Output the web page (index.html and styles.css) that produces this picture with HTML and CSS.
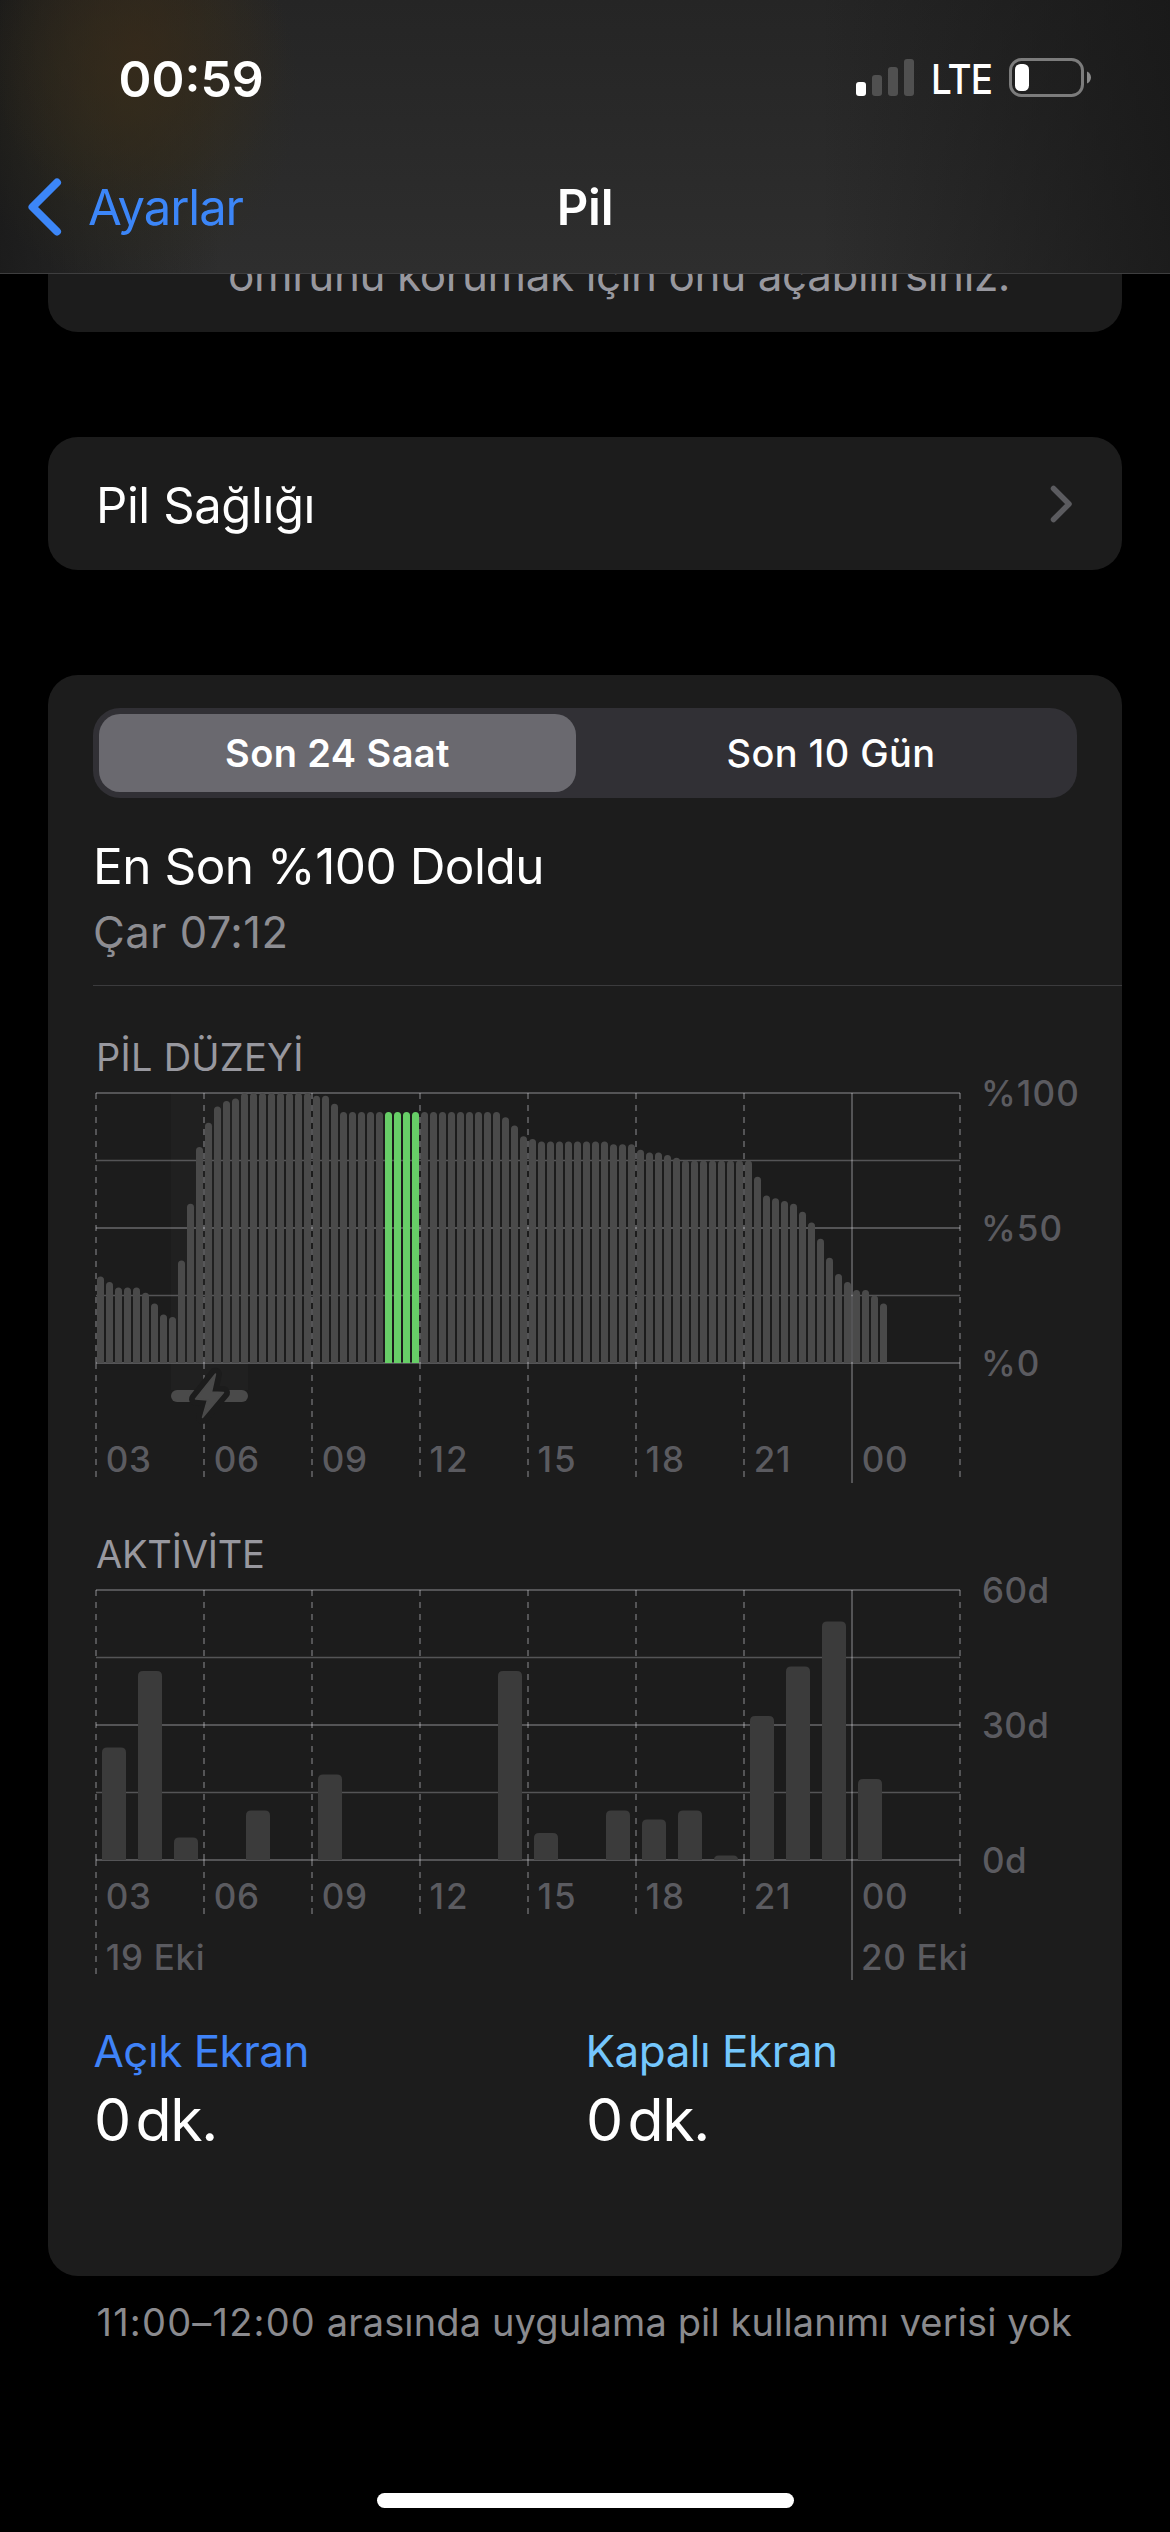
FILE: index.html
```html
<!DOCTYPE html>
<html lang="tr">
<head>
<meta charset="utf-8">
<title>Pil</title>
<link rel="stylesheet" href="styles.css">
</head>
<body>
<header class="header">
  <div class="status">
    <span class="time">00:59</span>
    <div class="indicators">
      <svg class="signal" width="58" height="37" viewBox="0 0 58 37">
        <rect x="0" y="23" width="10" height="14" rx="3" fill="#fff"/>
        <rect x="16" y="16" width="10" height="21" rx="3" fill="#505050"/>
        <rect x="32" y="8" width="10" height="29" rx="3" fill="#505050"/>
        <rect x="48" y="0" width="10" height="37" rx="3" fill="#505050"/>
      </svg>
      <span class="network">LTE</span>
      <svg class="battery" width="82" height="39" viewBox="0 0 82 39">
        <rect x="1.5" y="1.5" width="72" height="36" rx="11" fill="none" stroke="#7c7c7c" stroke-width="3"/>
        <rect x="6" y="6" width="14" height="27" rx="5.5" fill="#fff"/>
        <path d="M78 13.5c2.6 1.2 4 3.400 4 6s-1.400 4.800-4 6z" fill="#8a8a8a"/>
      </svg>
    </div>
  </div>
  <nav class="nav">
    <a class="back">
      <svg width="34" height="58" viewBox="0 0 34 58"><path d="M29 4.500L4.500 29 29 53.500" fill="none" stroke="#3c86f8" stroke-width="8" stroke-linecap="round" stroke-linejoin="round"/></svg>
      <span>Ayarlar</span>
    </a>
    <h1 class="title">Pil</h1>
  </nav>
</header>

<main class="content">
  <section class="card note">ömrünü korumak için onu açabilirsiniz.</section>

  <section class="card link-row">
    <span class="link-label">Pil Sağlığı</span>
    <svg width="23" height="38" viewBox="0 0 23 38"><path d="M3.500 3.500L19 19 3.500 34.500" fill="none" stroke="#5b5b5f" stroke-width="5.500" stroke-linecap="round" stroke-linejoin="round"/></svg>
  </section>

  <section class="card usage">
    <div class="segmented">
      <div class="segment selected">Son 24 Saat</div>
      <div class="segment">Son 10 Gün</div>
    </div>
    <div class="last-charge">
      <div class="charge-title">En Son %100 Doldu</div>
      <div class="charge-time">Çar 07:12</div>
    </div>

    <h2 class="chart-title level-title">PİL DÜZEYİ</h2>
    <svg class="chart" width="1029" height="408" viewBox="0 0 1029 408">
      <g transform="translate(3 11)">
        <rect class="charge-zone" x="75" y="0" width="77" height="297"/>
        <path class="grid" d="M0 0H864M0 135H864M0 270H864"/>
        <path class="grid thin" d="M0 67.500H864M0 202.500H864"/>
        <path class="grid dash" d="M0 0V270M108 0V270M216 0V270M324 0V270M432 0V270M540 0V270M648 0V270M864 0V270"/>
        <path class="grid dash" d="M0 270V384M108 270V384M216 270V384M324 270V384M432 270V384M540 270V384M648 270V384M864 270V384"/>
        <path class="grid" d="M756 0V390"/>
        <g id="level-bars"></g>
        <rect class="charge-fill" x="75" y="297" width="77" height="12" rx="6"/>
        <path class="bolt-halo" d="M119.500 281L99.500 306l12 1-5 17.500 21-25-12-.5z"/>
        <path class="bolt" d="M119.500 281L99.500 306l12 1-5 17.500 21-25-12-.5z"/>
        <g class="axis percent">
          <text x="885" y="13">%100</text>
          <text x="885" y="148">%50</text>
          <text x="885" y="283">%0</text>
        </g>
        <g class="axis">
          <text x="9.700" y="379">03</text><text x="117.700" y="379">06</text><text x="225.700" y="379">09</text>
          <text class="teen" x="333.500" y="379">12</text><text class="teen" x="441.500" y="379">15</text><text class="teen" x="549.500" y="379">18</text>
          <text x="657.700" y="379">21</text><text x="765.700" y="379">00</text>
        </g>
      </g>
    </svg>

    <h2 class="chart-title activity-title">AKTİVİTE</h2>
    <svg class="chart" width="1029" height="411" viewBox="0 0 1029 411">
      <g transform="translate(3 11)">
        <path class="grid" d="M0 0H864M0 135H864M0 270H864"/>
        <path class="grid thin" d="M0 67.500H864M0 202.500H864"/>
        <path class="grid dash" d="M0 0V270M108 0V270M216 0V270M324 0V270M432 0V270M540 0V270M648 0V270M864 0V270"/>
        <path class="grid dash" d="M0 270V384M108 270V324M216 270V324M324 270V324M432 270V324M540 270V324M648 270V324M864 270V324"/>
        <path class="grid" d="M756 0V390"/>
        <g id="activity-bars"></g>
        <g class="axis minutes">
          <text x="886" y="13">60d</text>
          <text x="886" y="148">30d</text>
          <text x="886" y="283">0d</text>
        </g>
        <g class="axis">
          <text x="9.700" y="319">03</text><text x="117.700" y="319">06</text><text x="225.700" y="319">09</text>
          <text class="teen" x="333.500" y="319">12</text><text class="teen" x="441.500" y="319">15</text><text class="teen" x="549.500" y="319">18</text>
          <text x="657.700" y="319">21</text><text x="765.700" y="319">00</text>
          <text x="9.700" y="380">19 Eki</text><text x="765" y="380">20 Eki</text>
        </g>
      </g>
    </svg>

    <div class="totals">
      <div>
        <div class="total-label on">Açık Ekran</div>
        <div class="total-value">0 dk.</div>
      </div>
      <div>
        <div class="total-label off">Kapalı Ekran</div>
        <div class="total-value">0 dk.</div>
      </div>
    </div>
  </section>

  <p class="footnote"><span class="range">11:00–12:00</span> arasında uygulama pil kullanımı verisi yok</p>
</main>
<div class="home-indicator"></div>
<script src="script.js"></script>
</body>
</html>
```
FILE: styles.css
```css
* { box-sizing: border-box; margin: 0; padding: 0; }

body {
  position: relative;
  width: 1170px;
  height: 2532px;
  overflow: hidden;
  background: #000;
  color: #fff;
  font-family: Inter, "Liberation Sans", sans-serif;
  font-weight: 400;
  white-space: nowrap;
}

svg { display: block; flex: none; }

/* Translucent bar that stays above the scrolled list */
.header {
  position: absolute;
  top: 0;
  left: 0;
  z-index: 1;
  width: 1170px;
  height: 274px;
  border-bottom: 1px solid #3e3e3f;
  background:
    radial-gradient(ellipse 150px 170px at 138px 50px, rgba(56, 42, 26, .7), rgba(54, 44, 28, 0)),
    radial-gradient(ellipse 170px 200px at 130px 90px, rgba(50, 46, 28, .75), rgba(46, 44, 30, 0)),
    linear-gradient(90deg, rgba(22, 22, 22, .75), rgba(24, 24, 24, 0) 220px, rgba(24, 24, 24, 0) 820px, rgba(22, 22, 22, .75)),
    linear-gradient(#252525, #2e2e2e);
}

.status {
  display: flex;
  align-items: center;
  justify-content: space-between;
  height: 157px;
  padding: 0 79px 0 118.5px;
}

.time { font-size: 50px; font-weight: 600; line-height: 60px; }

.indicators { display: flex; align-items: center; }
.signal { margin-right: 17px; }
.signal, .battery { transform: translateY(-1px); }
.network {
  width: 78px;
  font-size: 41px;
  font-weight: 500;
  line-height: 50px;
  letter-spacing: -1px;
  transform: scaleX(.9);
  transform-origin: left;
}

.nav {
  display: grid;
  grid-template-columns: 1fr auto 1fr;
  align-items: center;
  height: 100px;
}

.back {
  display: flex;
  align-items: center;
  gap: 26px;
  padding-left: 28px;
  color: #3c86f8;
  font-size: 49px;
  letter-spacing: -1.05px;
}

.title { font-size: 49px; font-weight: 600; letter-spacing: -.2px; }

.content { padding: 0 48px; }

.card { border-radius: 30px; background: #1c1c1c; }

.note {
  height: 332px;
  padding: 245px 0 0 180px;
  color: #98989f;
  font-size: 44px;
  line-height: 60px;
  letter-spacing: -.4px;
}

.link-row {
  display: flex;
  align-items: center;
  justify-content: space-between;
  height: 133px;
  margin-top: 105px;
  padding: 0 49px 0 48px;
}
.link-label { padding-top: 3px; font-size: 49px; letter-spacing: -.4px; }

.usage { height: 1601px; margin-top: 105px; padding: 33px 0 0 45px; }

.segmented {
  display: grid;
  grid-template-columns: 477px 1fr;
  gap: 15px;
  width: 984px;
  height: 90px;
  padding: 6px;
  border-radius: 27px;
  background: #313035;
}
.segment {
  display: flex;
  align-items: center;
  justify-content: center;
  font-size: 38px;
  font-weight: 500;
  letter-spacing: .4px;
}
.segment.selected { border-radius: 21px; background: #6a696f; font-weight: 600; }

.last-charge {
  height: 188px;
  padding-top: 35px;
  border-bottom: 1px solid #3b3b3d;
  line-height: 66px;
}
.charge-title { font-size: 49.5px; letter-spacing: -.5px; }
.charge-time { color: #8d8d92; font-size: 43.5px; letter-spacing: .46px; }

.chart-title {
  margin-left: 3px;
  color: #98989f;
  font-size: 38px;
  font-weight: 400;
  line-height: 50px;
}
.level-title { margin-top: 46px; letter-spacing: .25px; }
.activity-title { margin-top: 39px; letter-spacing: -.2px; }

.chart { overflow: visible; }
.grid { fill: none; stroke: rgba(235, 235, 245, .27); stroke-width: 2; }
.grid.thin { stroke-width: 1.3; }
.grid.dash { stroke-dasharray: 6; }
.charge-zone { fill: #202020; }
.charge-fill { fill: #4a4a4a; }
.bolt-halo { fill: #1c1c1c; stroke: #1c1c1c; stroke-width: 13; stroke-linejoin: round; }
.bolt { fill: #4a4a4a; stroke: #4a4a4a; stroke-width: 1.5; stroke-linejoin: round; }
.level { fill: #4a4a4a; }
.level.active { fill: #67ce67; }
.activity { fill: #3b3b3b; }

.axis { fill: #5b5b60; font-size: 35px; font-weight: 500; letter-spacing: .7px; }
.axis .teen { letter-spacing: 2px; }
.percent { letter-spacing: 1.1px; }
.minutes { letter-spacing: .4px; }

.totals { display: grid; grid-template-columns: 492px 1fr; margin-top: 32px; }
.total-label { margin-left: .5px; font-size: 44px; line-height: 58px; letter-spacing: -.5px; }
.total-label.on { color: #3f83f8; }
.total-label.off { color: #74c7fd; }
.total-value { margin-left: 1px; font-size: 59px; line-height: 80px; letter-spacing: -1.4px; word-spacing: -9.5px; }

.footnote {
  margin: 21px 0 0 48.5px;
  color: #8a8a8e;
  font-size: 38px;
  line-height: 50px;
  letter-spacing: .12px;
}
.range { letter-spacing: 1.2px; }

.home-indicator {
  position: absolute;
  bottom: 24px;
  left: 377px;
  width: 417px;
  height: 15px;
  border-radius: 8px;
  background: #fff;
}
```
FILE: script.js
```js
// Battery level in percent, one sample per quarter hour starting at 03:00
const levels = [
  32, 30, 28, 28, 28, 26, 22, 18, 17, 38, 59, 80,
  89, 95, 97, 98, 100, 100, 100, 100, 100, 100, 100, 100,
  99, 99, 96, 93, 93, 93, 93, 93, 93, 93, 93, 93,
  93, 93, 93, 93, 93, 93, 93, 93, 93, 91, 88, 84,
  83, 82, 82, 82, 82, 82, 82, 82, 82, 81, 81, 81,
  79, 78, 78, 77, 76, 75, 75, 75, 75, 75, 75, 75,
  75, 69, 62, 61, 60, 59, 56, 52, 46, 39, 33, 30,
  27, 27, 25, 22
];
// Minutes of activity per hour starting at 03:00
const activity = [25, 42, 5, 0, 11, 0, 19, 0, 0, 0, 0, 42, 6, 0, 11, 9, 11, 1, 32, 43, 53, 18];

const PLOT_HEIGHT = 270;

function addBar(parent, x, width, height, radius, className) {
  const r = Math.min(radius, height);
  const bar = document.createElementNS('http://www.w3.org/2000/svg', 'path');
  bar.setAttribute('class', className);
  bar.setAttribute('d', `M${x} ${PLOT_HEIGHT}v${r - height}q0 ${-r} ${r} ${-r}h${width - 2 * r}q${r} 0 ${r} ${r}v${height - r}z`);
  parent.appendChild(bar);
}

const levelBars = document.getElementById('level-bars');
levels.forEach((value, i) => {
  const selected = i >= 32 && i < 36;
  addBar(levelBars, 1 + i * 9, 7, value * 2.7, 3.5, selected ? 'level active' : 'level');
});

const activityBars = document.getElementById('activity-bars');
activity.forEach((value, i) => {
  if (value) addBar(activityBars, 6 + i * 36, 24, value * 4.5, 5, 'activity');
});
```
